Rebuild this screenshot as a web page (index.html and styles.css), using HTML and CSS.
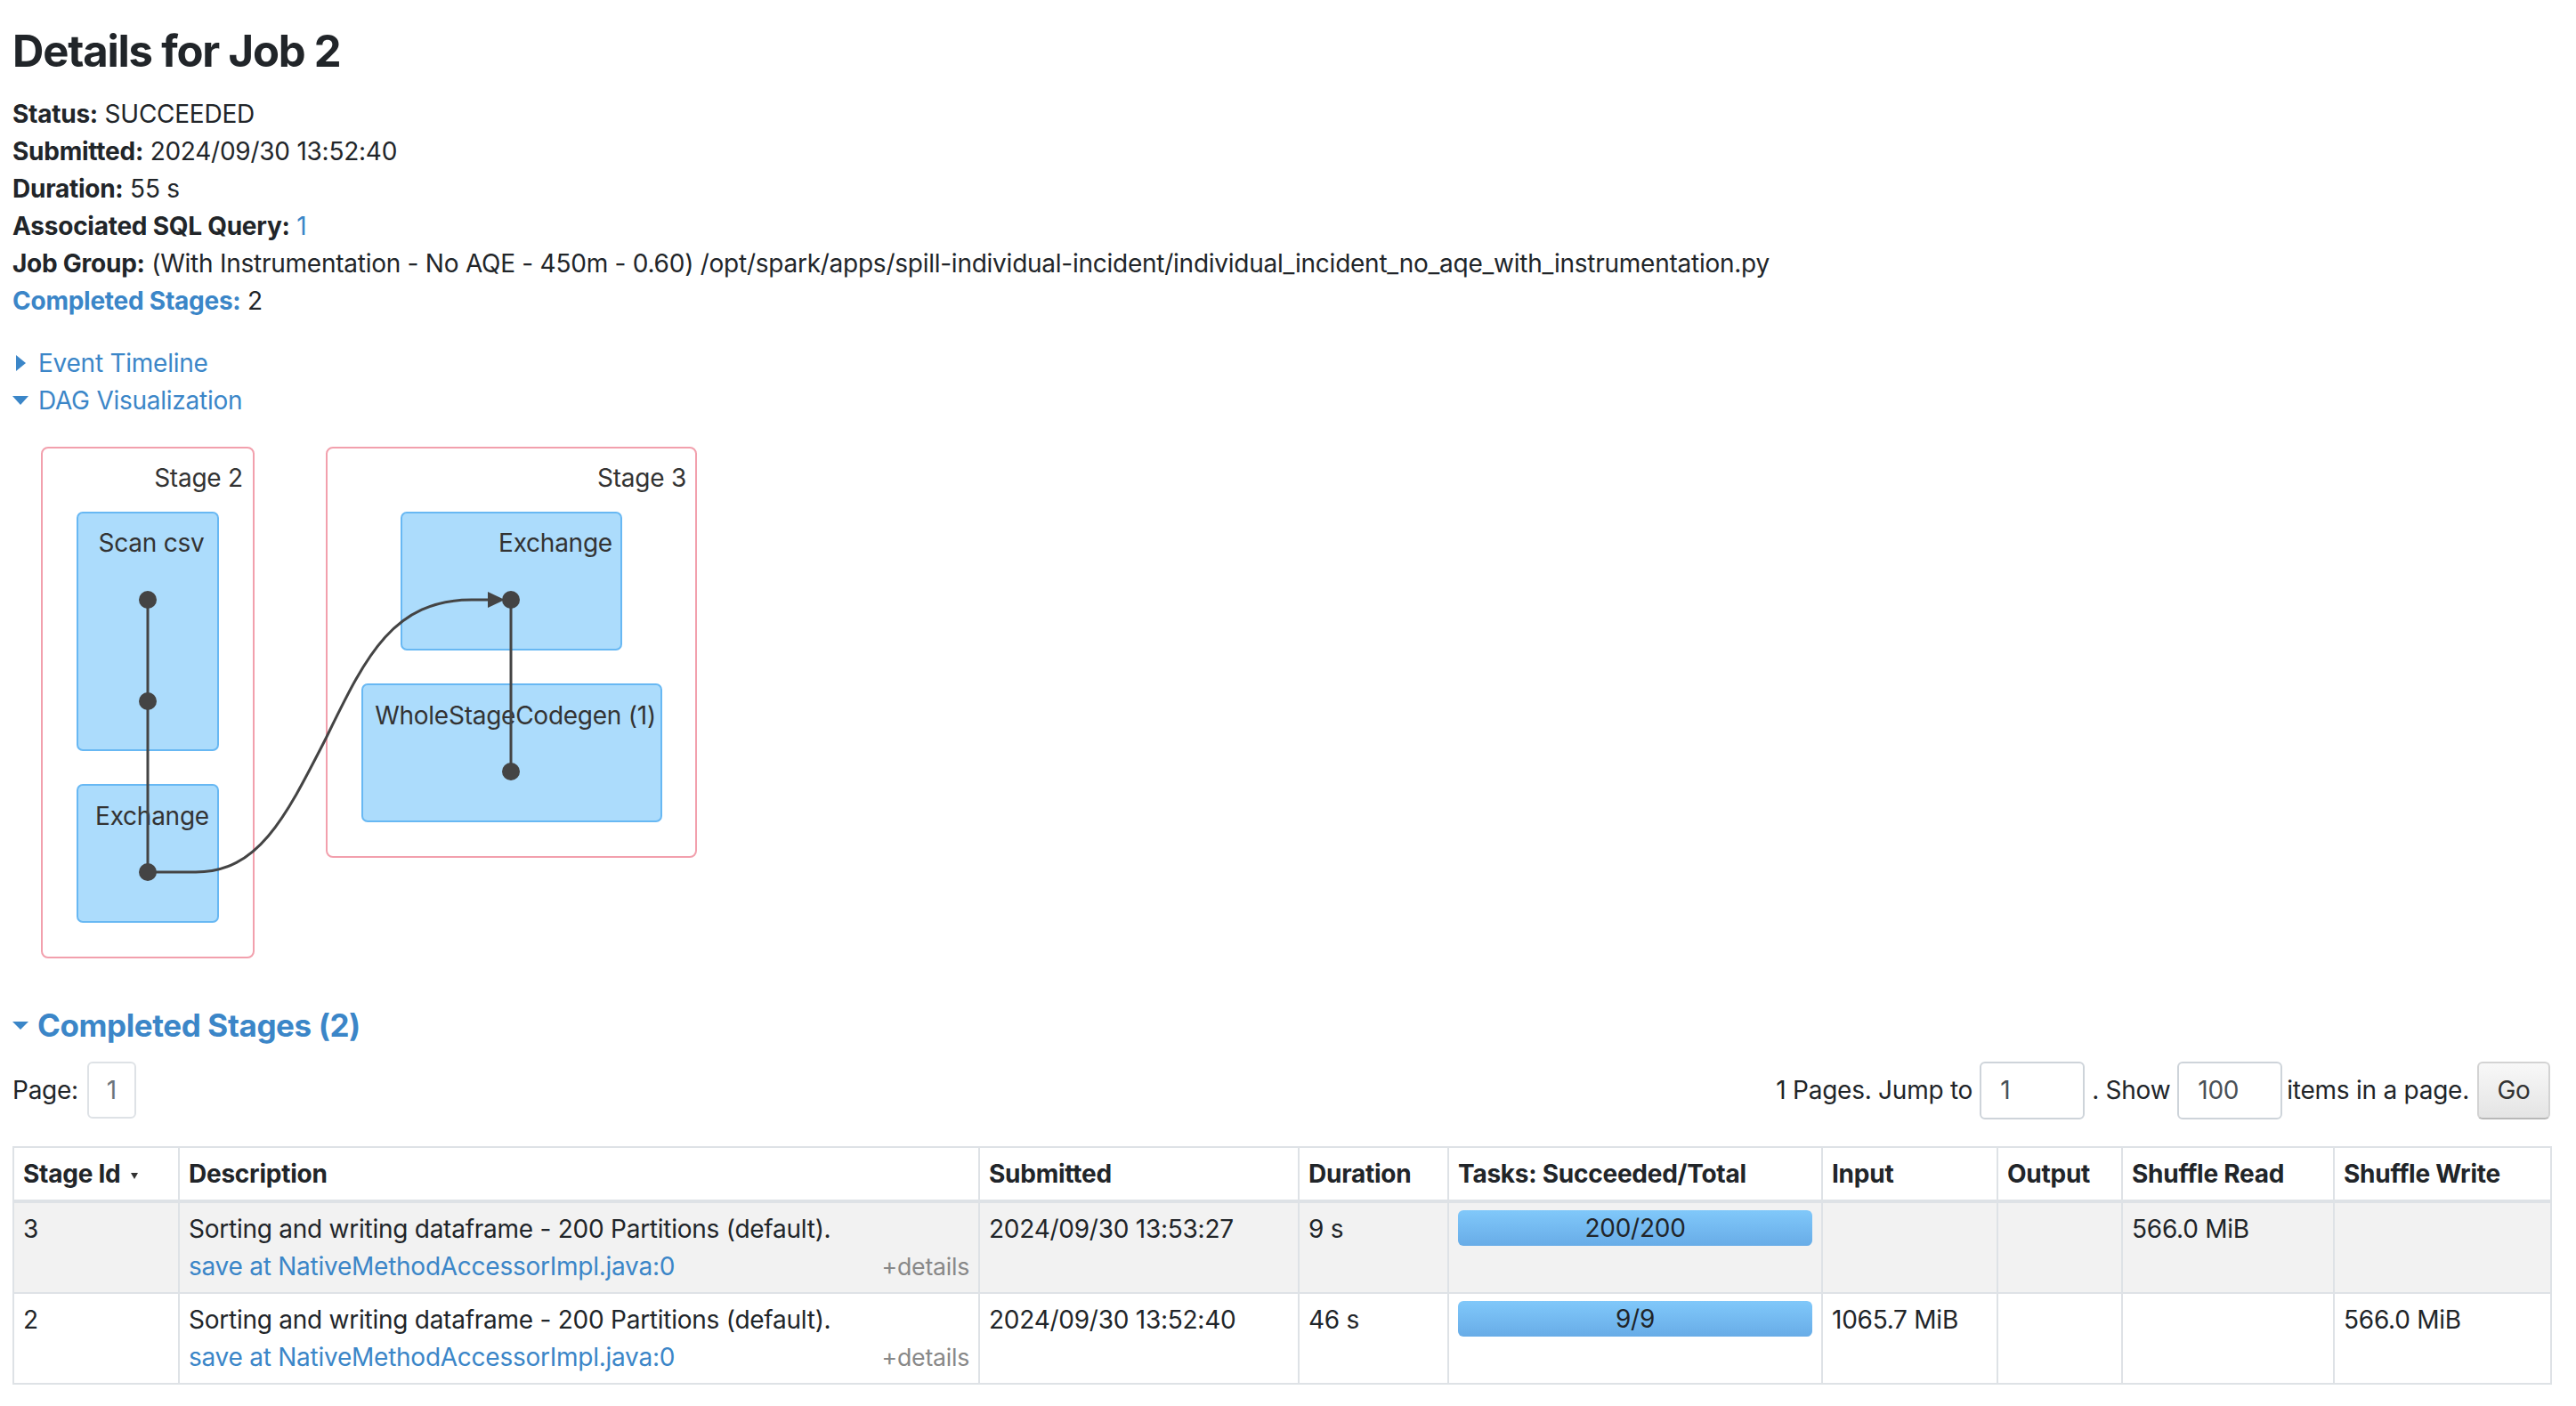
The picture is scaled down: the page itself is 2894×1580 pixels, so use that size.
FILE: index.html
```html
<!DOCTYPE html>
<html lang="en">
<head>
<meta charset="utf-8">
<title>Details for Job 2</title>
<link rel="stylesheet" href="styles.css">
</head>
<body>
<div class="page">
  <h3 class="title">Details for Job 2</h3>
  <ul class="summary">
    <li><strong>Status:</strong> SUCCEEDED</li>
    <li><strong>Submitted:</strong> 2024/09/30 13:52:40</li>
    <li><strong>Duration:</strong> 55 s</li>
    <li><strong>Associated SQL Query:</strong> <a href="#">1</a></li>
    <li><strong>Job Group:</strong> (With Instrumentation - No AQE - 450m - 0.60) /opt/spark/apps/spill-individual-incident/individual_incident_no_aqe_with_instrumentation.py</li>
    <li><a href="#" class="strong-link">Completed Stages:</a> 2</li>
  </ul>

  <div class="toggle"><span class="arrow-closed"></span><a href="#">Event Timeline</a></div>
  <div class="toggle"><span class="arrow-open"></span><a href="#">DAG Visualization</a></div>

  <svg class="dag" width="800" height="610" viewBox="14 480 800 610" xmlns="http://www.w3.org/2000/svg">
    <rect class="cluster" x="47" y="503" width="238" height="573" rx="7"/>
    <rect class="cluster" x="367" y="503" width="415" height="460" rx="7"/>
    <text class="label" x="223" y="547" text-anchor="middle">Stage 2</text>
    <text class="label" x="721" y="547" text-anchor="middle">Stage 3</text>

    <rect class="scope" x="87" y="576" width="158" height="267" rx="6"/>
    <rect class="scope" x="87" y="882" width="158" height="154" rx="6"/>
    <rect class="scope" x="451" y="576" width="247" height="154" rx="6"/>
    <rect class="scope" x="407" y="769" width="336" height="154" rx="6"/>

    <text class="label" x="170" y="620" text-anchor="middle">Scan csv</text>
    <text class="label" x="171" y="927" text-anchor="middle">Exchange</text>
    <text class="label" x="624" y="620" text-anchor="middle">Exchange</text>
    <text class="label" x="579" y="814" text-anchor="middle">WholeStageCodegen (1)</text>

    <path class="edge" d="M166 674 V980"/>
    <path class="edge" d="M574 674 V867"/>
    <path class="edge" d="M166 980 L220 980 C290 980 320 920 366 830 C410 740 440 674 530 674 L550 674"/>
    <polygon class="arrowhead" points="548,665 567,674 548,683"/>

    <circle class="dot" cx="166" cy="674" r="10"/>
    <circle class="dot" cx="166" cy="788" r="10"/>
    <circle class="dot" cx="166" cy="980" r="10"/>
    <circle class="dot" cx="574" cy="674" r="10"/>
    <circle class="dot" cx="574" cy="867" r="10"/>
  </svg>

  <h4 class="section-title"><span class="arrow-open-lg"></span>Completed Stages (2)</h4>

  <div class="pager">
    <div class="pager-left">
      <span>Page:</span>
      <span class="page-box">1</span>
    </div>
    <div class="pager-right">
      <span>1 Pages. Jump to</span>
      <span class="field">1</span>
      <span>. Show</span>
      <span class="field">100</span>
      <span class="items-label">items in a page.</span>
      <span class="go-btn">Go</span>
    </div>
  </div>

  <table class="stages">
    <colgroup>
      <col class="c-id">
      <col class="c-desc">
      <col class="c-sub">
      <col class="c-dur">
      <col class="c-tasks">
      <col class="c-in">
      <col class="c-out">
      <col class="c-sr">
      <col class="c-sw">
    </colgroup>
    <thead>
      <tr>
        <th>Stage Id<span class="sort-arrow"></span></th>
        <th>Description</th>
        <th>Submitted</th>
        <th>Duration</th>
        <th>Tasks: Succeeded/Total</th>
        <th>Input</th>
        <th>Output</th>
        <th>Shuffle Read</th>
        <th>Shuffle Write</th>
      </tr>
    </thead>
    <tbody>
      <tr class="odd">
        <td>3</td>
        <td>
          <div>Sorting and writing dataframe - 200 Partitions (default).</div>
          <div class="desc-line"><a href="#">save at NativeMethodAccessorImpl.java:0</a><span class="expand-details">+details</span></div>
        </td>
        <td>2024/09/30 13:53:27</td>
        <td>9 s</td>
        <td><div class="progress">200/200</div></td>
        <td></td>
        <td></td>
        <td>566.0 MiB</td>
        <td></td>
      </tr>
      <tr>
        <td>2</td>
        <td>
          <div>Sorting and writing dataframe - 200 Partitions (default).</div>
          <div class="desc-line"><a href="#">save at NativeMethodAccessorImpl.java:0</a><span class="expand-details">+details</span></div>
        </td>
        <td>2024/09/30 13:52:40</td>
        <td>46 s</td>
        <td><div class="progress">9/9</div></td>
        <td>1065.7 MiB</td>
        <td></td>
        <td></td>
        <td>566.0 MiB</td>
      </tr>
    </tbody>
  </table>
</div>
</body>
</html>
```

FILE: styles.css
```css
* { box-sizing: border-box; }

html, body {
  margin: 0;
  padding: 0;
  background: #ffffff;
}

body {
  font-family: Inter, "Liberation Sans", Arial, sans-serif;
  font-size: 28px;
  line-height: 42px;
  letter-spacing: -0.25px;
  color: #212529;
}

a {
  color: #3b86c8;
  text-decoration: none;
}

.page {
  padding: 0 29px 0 14px;
}

.title {
  font-size: 49px;
  line-height: 59px;
  font-weight: 700;
  letter-spacing: -1.2px;
  margin: 28px 0 20px;
  color: #212529;
}

.summary {
  list-style: none;
  margin: 0 0 28px;
  padding: 0;
}

.summary strong,
.strong-link {
  font-weight: 700;
}

.toggle {
  display: flex;
  align-items: center;
  height: 42px;
}

.arrow-closed {
  width: 0;
  height: 0;
  border-top: 9px solid transparent;
  border-bottom: 9px solid transparent;
  border-left: 11px solid #3b86c8;
  margin: 0 14px 0 4px;
}

.arrow-open {
  width: 0;
  height: 0;
  border-left: 9px solid transparent;
  border-right: 9px solid transparent;
  border-top: 10px solid #3b86c8;
  margin-right: 11px;
}

.dag {
  display: block;
  margin-top: 9px;
}

.dag .cluster {
  fill: #ffffff;
  stroke: #f2a0ad;
  stroke-width: 2;
}

.dag .scope {
  fill: #acdcfc;
  stroke: #68b8f3;
  stroke-width: 2;
}

.dag .label {
  font-family: Inter, "Liberation Sans", Arial, sans-serif;
  font-size: 28px;
  fill: #333333;
}

.dag .edge {
  fill: none;
  stroke: #444444;
  stroke-width: 3;
}

.dag .arrowhead,
.dag .dot {
  fill: #444444;
}

.section-title {
  display: flex;
  align-items: center;
  font-size: 35px;
  line-height: 42px;
  font-weight: 700;
  letter-spacing: -0.4px;
  color: #3b86c8;
  margin: 41px 0 0;
}

.arrow-open-lg {
  width: 0;
  height: 0;
  border-left: 9.5px solid transparent;
  border-right: 9.5px solid transparent;
  border-top: 9px solid #3b86c8;
  margin-right: 10px;
}

.pager {
  display: flex;
  justify-content: space-between;
  align-items: center;
  height: 66px;
  margin: 19px 0 30px;
}

.pager-left,
.pager-right {
  display: flex;
  align-items: center;
}

.page-box {
  display: flex;
  align-items: center;
  justify-content: center;
  width: 55px;
  height: 64px;
  margin-left: 10px;
  border: 2px solid #dee2e6;
  border-radius: 6px;
  color: #6c757d;
}

.pager-right {
  gap: 8px;
}

.field {
  display: flex;
  align-items: center;
  width: 118px;
  height: 65px;
  padding: 0 21px;
  border: 2px solid #ced4da;
  border-radius: 6px;
  color: #495057;
}

.items-label {
  margin-left: -3px;
}

.go-btn {
  display: flex;
  align-items: center;
  justify-content: center;
  width: 82px;
  height: 65px;
  margin-left: 1px;
  border: 2px solid #d3d3d3;
  border-bottom-color: #b8b8b8;
  border-radius: 6px;
  background: linear-gradient(to bottom, #f8f8f8, #e4e4e4);
  color: #333333;
}

.stages {
  width: 2851px;
  table-layout: fixed;
  border-collapse: collapse;
}

.stages .c-id { width: 186px; }
.stages .c-desc { width: 899px; }
.stages .c-sub { width: 359px; }
.stages .c-dur { width: 168px; }
.stages .c-tasks { width: 420px; }
.stages .c-in { width: 197px; }
.stages .c-out { width: 140px; }
.stages .c-sr { width: 238px; }
.stages .c-sw { width: 244px; }

.stages th,
.stages td {
  border: 2px solid #dee2e6;
  padding: 8px 10px;
  vertical-align: top;
  text-align: left;
  white-space: nowrap;
}

.stages thead th {
  border-bottom-width: 4px;
  font-weight: 700;
  color: #212529;
}

.stages tr.odd {
  background: #f2f2f2;
}

.sort-arrow {
  display: inline-block;
  width: 0;
  height: 0;
  margin-left: 11px;
  vertical-align: middle;
  border-left: 4.5px solid transparent;
  border-right: 4.5px solid transparent;
  border-top: 7px solid #333333;
}

.desc-line {
  display: flex;
  justify-content: space-between;
  align-items: center;
}

.expand-details {
  font-size: 26.7px;
  color: #888888;
}

.progress {
  height: 40px;
  line-height: 40px;
  border-radius: 6px;
  text-align: center;
  background: linear-gradient(to bottom, #80c8fa, #68ace7);
  color: #212529;
}
```
